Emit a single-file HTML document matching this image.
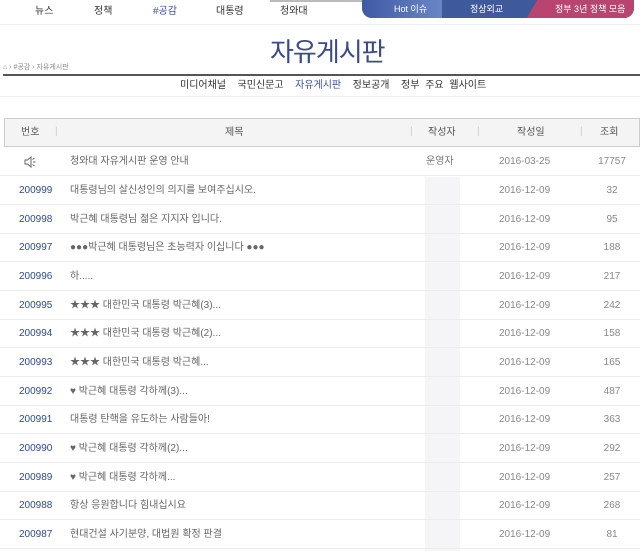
<!DOCTYPE html>
<html><head><meta charset="utf-8"><style>
*{margin:0;padding:0;box-sizing:border-box}
body{width:640px;height:551px;overflow:hidden;background:#fff;font-family:"Liberation Sans","Noto Sans CJK KR",sans-serif;color:#555;position:relative;line-height:12px}
.a{position:absolute;white-space:nowrap;line-height:12px}
.nav{font-size:10px;color:#333;top:6px}
.banner{position:absolute;left:362px;top:0;width:272px;height:18px;border-radius:0 0 10px 10px;overflow:hidden;background:#3e5a9c}
.row{position:absolute;left:0;width:640px;height:28px;border-bottom:1px solid #ececec;font-size:10px}
.row span{position:absolute;top:8px;line-height:12px;white-space:nowrap}
.num{left:19px;color:#2d4a8e}
.t{left:70px;color:#666}
.d{left:499px;color:#888}
.c{width:40px;left:592px;text-align:center;color:#888}
</style></head><body>
<div style="position:absolute;left:0;top:0;width:640px;height:25px;border-bottom:1px solid #eee"></div>
<div style="position:absolute;left:270px;top:0;width:100px;height:2px;background:#bbb"></div>
<div class="a nav" style="left:35px">뉴스</div>
<div class="a nav" style="left:94px">정책</div>
<div class="a nav" style="left:153px;color:#3a50a0">#공감</div>
<div class="a nav" style="left:216px">대통령</div>
<div class="a nav" style="left:280px">청와대</div>
<div class="banner">
<div style="position:absolute;left:0;top:0;width:80px;height:18px;background:linear-gradient(90deg,#3f5aa3,#6a86c6)"></div>
<div style="position:absolute;left:170px;top:0;width:120px;height:18px;background:#b8456f;transform:skewX(-30deg)"></div>
<div class="a" style="left:32px;top:3px;font-size:9px;color:#fff">Hot 이슈</div>
<div class="a" style="left:108px;top:3px;font-size:9px;color:#fff">정상외교</div>
<div class="a" style="left:193px;top:3px;font-size:9px;color:#fff">정부 3년 정책 모음</div>
</div>
<div class="a" style="left:270px;top:38px;font-size:26px;line-height:28px;color:#3a4a8a;letter-spacing:-1px">자유게시판</div>
<div class="a" style="left:3px;top:63px;font-size:7px;line-height:9px;color:#888">⌂ › #공감 › 자유게시판</div>
<div style="position:absolute;left:3px;top:74px;width:637px;height:2px;background:#555"></div>
<div class="a" style="left:180px;top:80px;font-size:10px;color:#333;word-spacing:3px">미디어채널 &nbsp;국민신문고 &nbsp;<span style="color:#3a50a0">자유게시판</span> &nbsp;정보공개 &nbsp;정부 주요 웹사이트</div>
<div style="position:absolute;left:0;top:96px;width:640px;height:1px;background:#eee"></div>
<div style="position:absolute;left:4px;top:118px;width:636px;height:29px;border:1px solid #ccc;background:#f4f4f4;font-size:10px;color:#555">
<span class="a" style="left:16px;top:8px">번호</span>
<span class="a" style="left:50px;top:7px;color:#ccc">|</span>
<span class="a" style="left:220px;top:8px">제목</span>
<span class="a" style="left:405px;top:7px;color:#ccc">|</span>
<span class="a" style="left:423px;top:8px">작성자</span>
<span class="a" style="left:472px;top:7px;color:#ccc">|</span>
<span class="a" style="left:512px;top:8px">작성일</span>
<span class="a" style="left:575px;top:7px;color:#ccc">|</span>
<span class="a" style="left:595px;top:8px">조회</span>
</div>
<div class="row" style="top:148px"><span style="left:24px;top:8px"><svg width="12" height="12" viewBox="0 0 12 12"><path d="M1 4h2.5L7 1v10L3.5 8H1z" fill="none" stroke="#667" stroke-width="1"/><path d="M8.5 3.5l2-1.5M9 6h2.5M8.5 8.5l2 1.5" stroke="#667" stroke-width="1"/></svg></span><span class="t">청와대 자유게시판 운영 안내</span><span style="left:426px;color:#777">운영자</span><span class="d">2016-03-25</span><span class="c">17757</span></div>
<div style="position:absolute;left:425px;top:177px;width:35px;height:374px;background:#f5f5f7"></div>
<div class="row" style="top:177px"><span class="num">200999</span><span class="t">대통령님의 살신성인의 의지를 보여주십시오.</span><span class="d">2016-12-09</span><span class="c">32</span></div>
<div class="row" style="top:206px"><span class="num">200998</span><span class="t">박근혜 대통령님 젊은 지지자 입니다.</span><span class="d">2016-12-09</span><span class="c">95</span></div>
<div class="row" style="top:234px"><span class="num">200997</span><span class="t">●●●박근혜 대통령님은 초능력자 이십니다 ●●●</span><span class="d">2016-12-09</span><span class="c">188</span></div>
<div class="row" style="top:263px"><span class="num">200996</span><span class="t">하.....</span><span class="d">2016-12-09</span><span class="c">217</span></div>
<div class="row" style="top:292px"><span class="num">200995</span><span class="t">★★★ 대한민국 대통령 박근혜(3)...</span><span class="d">2016-12-09</span><span class="c">242</span></div>
<div class="row" style="top:320px"><span class="num">200994</span><span class="t">★★★ 대한민국 대통령 박근혜(2)...</span><span class="d">2016-12-09</span><span class="c">158</span></div>
<div class="row" style="top:349px"><span class="num">200993</span><span class="t">★★★ 대한민국 대통령 박근혜...</span><span class="d">2016-12-09</span><span class="c">165</span></div>
<div class="row" style="top:378px"><span class="num">200992</span><span class="t">♥ 박근혜 대통령 각하께(3)...</span><span class="d">2016-12-09</span><span class="c">487</span></div>
<div class="row" style="top:406px"><span class="num">200991</span><span class="t">대통령 탄핵을 유도하는 사람들아!</span><span class="d">2016-12-09</span><span class="c">363</span></div>
<div class="row" style="top:435px"><span class="num">200990</span><span class="t">♥ 박근혜 대통령 각하께(2)...</span><span class="d">2016-12-09</span><span class="c">292</span></div>
<div class="row" style="top:464px"><span class="num">200989</span><span class="t">♥ 박근혜 대통령 각하께...</span><span class="d">2016-12-09</span><span class="c">257</span></div>
<div class="row" style="top:492px"><span class="num">200988</span><span class="t">항상 응원합니다 힘내십시요</span><span class="d">2016-12-09</span><span class="c">268</span></div>
<div class="row" style="top:521px"><span class="num">200987</span><span class="t">현대건설 사기분양, 대법원 확정 판결</span><span class="d">2016-12-09</span><span class="c">81</span></div>
</body></html>
